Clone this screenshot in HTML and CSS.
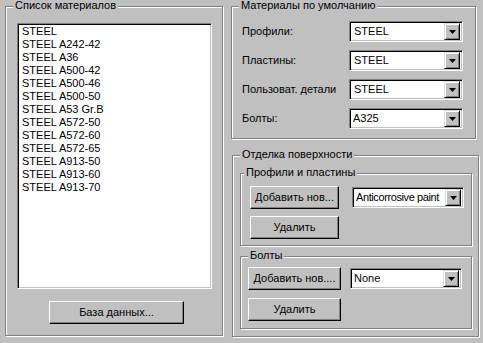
FILE: index.html
```html
<!DOCTYPE html>
<html lang="ru">
<head>
  <meta charset="UTF-8">
  <title>Материалы</title>
  <link rel="stylesheet" href="styles.css">
</head>
<body>

  <div class="dialog">
    <!-- Materials list -->
    <div class="group list-group">
      <span class="legend">Список материалов</span>
      <ul class="listbox">
        <li>STEEL</li>
        <li>STEEL A242-42</li>
        <li>STEEL A36</li>
        <li>STEEL A500-42</li>
        <li>STEEL A500-46</li>
        <li>STEEL A500-50</li>
        <li>STEEL A53 Gr.B</li>
        <li>STEEL A572-50</li>
        <li>STEEL A572-60</li>
        <li>STEEL A572-65</li>
        <li>STEEL A913-50</li>
        <li>STEEL A913-60</li>
        <li>STEEL A913-70</li>
      </ul>
      <button class="btn db-btn">База данных...</button>
    </div>

    <div class="right-col">
      <!-- Default materials -->
      <div class="group defaults-group">
        <span class="legend">Материалы по умолчанию</span>
        <div class="field-row">
          <span class="field-label">Профили:</span>
          <div class="combo"><span class="combo-value">STEEL</span><span class="combo-arrow"><svg width="7" height="4"><polygon points="0,0 7,0 3.5,4" fill="#000"/></svg></span></div>
        </div>
        <div class="field-row">
          <span class="field-label">Пластины:</span>
          <div class="combo"><span class="combo-value">STEEL</span><span class="combo-arrow"><svg width="7" height="4"><polygon points="0,0 7,0 3.5,4" fill="#000"/></svg></span></div>
        </div>
        <div class="field-row">
          <span class="field-label">Пользоват. детали</span>
          <div class="combo"><span class="combo-value">STEEL</span><span class="combo-arrow"><svg width="7" height="4"><polygon points="0,0 7,0 3.5,4" fill="#000"/></svg></span></div>
        </div>
        <div class="field-row">
          <span class="field-label">Болты:</span>
          <div class="combo"><span class="combo-value tight">A325</span><span class="combo-arrow"><svg width="7" height="4"><polygon points="0,0 7,0 3.5,4" fill="#000"/></svg></span></div>
        </div>
      </div>

      <!-- Surface finish -->
      <div class="group finish-group">
        <span class="legend">Отделка поверхности</span>

        <div class="group sub-group">
          <span class="legend">Профили и пластины</span>
          <div class="sub-row">
            <button class="btn sub-btn">Добавить нов...</button>
            <div class="combo finish-combo"><span class="combo-value tight narrow">Anticorrosive paint</span><span class="combo-arrow"><svg width="7" height="4"><polygon points="0,0 7,0 3.5,4" fill="#000"/></svg></span></div>
          </div>
          <button class="btn sub-btn">Удалить</button>
        </div>

        <div class="group sub-group bolts">
          <span class="legend">Болты</span>
          <div class="sub-row">
            <button class="btn sub-btn">Добавить нов....</button>
            <div class="combo finish-combo"><span class="combo-value tight">None</span><span class="combo-arrow"><svg width="7" height="4"><polygon points="0,0 7,0 3.5,4" fill="#000"/></svg></span></div>
          </div>
          <button class="btn sub-btn">Удалить</button>
        </div>
      </div>
    </div>
  </div>

</body>
</html>
```

FILE: styles.css
```css
* {
  margin: 0;
  padding: 0;
  box-sizing: border-box;
}

body {
  font-family: "Liberation Sans", Arial, sans-serif;
  font-size: 11px;
  line-height: 13px;
  color: #000;
  background-color: #c0c0c0;
  width: 483px;
  height: 343px;
  overflow: hidden;
}

.dialog {
  display: flex;
  padding: 6px 0 0 5px;
}

/* Etched group box */
.group {
  position: relative;
  border: 1px solid #808080;
  box-shadow: inset 1px 1px 0 #fff, 1px 1px 0 #fff;
}

.legend {
  position: absolute;
  top: -8px;
  left: 7px;
  padding: 0 2px;
  background-color: #c0c0c0;
  white-space: nowrap;
}

/* Left column */
.list-group {
  width: 218px;
  height: 330px;
  display: flex;
  flex-direction: column;
  padding: 16px 0 0 11px;
}

.listbox {
  list-style: none;
  width: 195px;
  height: 266px;
  background-color: #fff;
  border: 1px solid;
  border-color: #808080 #fff #fff #808080;
  box-shadow: inset 1px 1px 0 #000, inset -1px -1px 0 #c0c0c0;
  padding: 1px 0 0 4px;
}

.listbox li {
  height: 13px;
  white-space: nowrap;
}

.btn {
  font-family: inherit;
  font-size: 11px;
  line-height: 13px;
  color: #000;
  background-color: #c0c0c0;
  border: 1px solid;
  border-color: #fff #000 #000 #fff;
  box-shadow: inset -1px -1px 0 #808080;
  height: 23px;
  padding-bottom: 1px;
  white-space: nowrap;
}

.db-btn {
  width: 135px;
  margin: 12px 0 0 32px;
}

/* Right column */
.right-col {
  display: flex;
  flex-direction: column;
  align-items: flex-start;
  margin-left: 8px;
}

.defaults-group {
  width: 245px;
  height: 133px;
  padding: 14px 0 0 10px;
  display: flex;
  flex-direction: column;
  gap: 8px;
}

.field-row {
  display: flex;
  align-items: center;
}

.field-label {
  width: 107px;
  white-space: nowrap;
}

.combo {
  display: flex;
  align-items: center;
  justify-content: space-between;
  width: 114px;
  height: 21px;
  background-color: #fff;
  border: 1px solid;
  border-color: #808080 #fff #fff #808080;
  box-shadow: inset 1px 1px 0 #000, inset -1px -1px 0 #c0c0c0;
  padding: 2px 2px 2px 4px;
}

.combo-value {
  flex: 1;
  min-width: 0;
  white-space: nowrap;
  overflow: hidden;
}

.combo-value.tight {
  margin-left: -1px;
}

.combo-value.narrow {
  letter-spacing: -0.4px;
}

.combo-arrow {
  flex: none;
  display: flex;
  align-items: center;
  justify-content: center;
  width: 16px;
  height: 17px;
  background-color: #c0c0c0;
  border: 1px solid;
  border-color: #dfdfdf #000 #000 #dfdfdf;
  box-shadow: inset 1px 1px 0 #fff, inset -1px -1px 0 #808080;
}

.combo-arrow svg {
  display: block;
}

.finish-group {
  width: 247px;
  height: 182px;
  margin: 16px 0 0 1px;
  padding: 17px 0 0 7px;
}

.sub-group {
  width: 232px;
  height: 73px;
  padding: 12px 0 0 9px;
  display: flex;
  flex-direction: column;
  gap: 7px;
}

.sub-group .legend {
  left: 3px;
}

.sub-row {
  display: flex;
  align-items: center;
  gap: 13px;
}

.sub-btn {
  width: 89px;
}

.finish-combo {
  width: 112px;
}

.bolts {
  margin-top: 10px;
  padding: 10px 0 0 7px;
  gap: 8px;
}

.bolts .legend {
  left: 7px;
}

.bolts .sub-btn {
  width: 93px;
}

.bolts .sub-row {
  gap: 9px;
}
```
